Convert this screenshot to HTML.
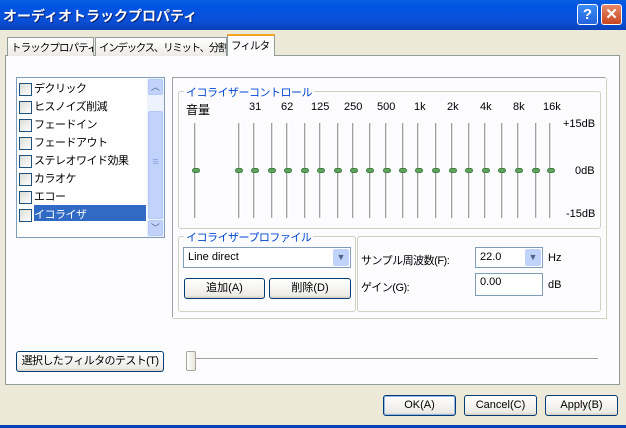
<!DOCTYPE html>
<html><head><meta charset="utf-8"><style>
*{margin:0;padding:0;box-sizing:border-box}
body{width:626px;height:428px;overflow:hidden;background:#ece9d8;font-family:"Liberation Sans","Noto Sans CJK JP",sans-serif;font-size:11px;color:#000;position:relative;white-space:nowrap}
.a{position:absolute}
.title{left:0;top:0;width:626px;height:30px;background:linear-gradient(#0a5fe0,#0054e3 20%,#0a4fd8 70%,#0842b8);color:#fff;font-size:14px;font-weight:bold;padding:6px 0 0 3px;text-shadow:1px 1px #0a1f6e}
.tb{top:4px;width:21px;height:21px;border:1px solid #fff;border-radius:3px;color:#fff;font-weight:bold;text-align:center;font-size:15px;line-height:19px}
.tab{top:37px;height:19px;background:linear-gradient(#fff,#ecebe6);border:1px solid #919b9c;border-bottom:none;padding:2px 3px;font-size:10.5px;letter-spacing:-0.9px;overflow:hidden}
.panel{left:5px;top:55px;width:615px;height:330px;background:#fcfcfe;border:1px solid #919b9c}
.cb{width:13px;height:13px;border:1px solid #1c5180;background:linear-gradient(135deg,#dcdcd6,#fff)}
.grp{border:1px solid #d0d0bf;border-radius:3px}
.gl{background:#fcfcfe;color:#0046d5;padding:0 2px;font-size:11px;letter-spacing:-0.5px}
.track{width:3px;top:123px;height:95px;border-left:1px solid #a0a0a0;border-right:1px solid #fff;background:#e0e0e0}
.th{top:168px;width:8px;height:5px;border-radius:3px;background:#5fa35f;border:1px solid #3f7f3f}
.btn{border:1px solid #003c74;border-radius:3px;background:linear-gradient(#fff,#ecebe6 85%,#d6d0c5);text-align:center;font-size:11px;overflow:hidden}
.lbl{top:101px;font-size:11px}
.li{display:flex;align-items:center;gap:2px;letter-spacing:-0.5px}
</style></head><body>
<div class="a title">オーディオトラックプロパティ</div>
<div class="a tb" style="left:577px;background:linear-gradient(#3c8cf6,#2463de)">?</div>
<div class="a tb" style="left:601px;background:linear-gradient(#e88a6a,#c8451f)">✕</div>

<div class="a panel"></div>
<div class="a tab" style="left:7px;width:87px">トラックプロパティ</div>
<div class="a tab" style="left:95px;width:132px;letter-spacing:-1.3px">インデックス、リミット、分割</div>
<div class="a tab" style="left:227px;top:34px;height:22px;width:48px;background:#fcfcfe;border-top:2px solid #f5a623">フィルタ</div>

<div class="a" style="left:16px;top:77px;width:149px;height:161px;background:#fff;border:1px solid #7f9db9"></div>
<div class="a" style="left:147px;top:78px;width:17px;height:159px;background:#eef2fc"></div>
<div class="a" style="left:148px;top:79px;width:15px;height:16px;background:#c1d3fb;border:1px solid #b4c8f6;border-radius:2px;color:#4d6185;font-size:9px;text-align:center">︿</div>
<div class="a" style="left:148px;top:111px;width:15px;height:108px;background:#c1d3fb;border:1px solid #b4c8f6;border-radius:2px;color:#8aa3dc;text-align:center;line-height:100px">≡</div>
<div class="a" style="left:148px;top:220px;width:15px;height:16px;background:#c1d3fb;border:1px solid #b4c8f6;border-radius:2px;color:#4d6185;font-size:9px;text-align:center">﹀</div>
<div class="a" style="left:34px;top:205px;width:112px;height:16px;background:#316ac5"></div>
<div class="a" style="left:19px;top:80px;line-height:18px">
<div class="li"><div class="cb"></div>デクリック</div>
<div class="li"><div class="cb"></div>ヒスノイズ削減</div>
<div class="li"><div class="cb"></div>フェードイン</div>
<div class="li"><div class="cb"></div>フェードアウト</div>
<div class="li"><div class="cb"></div>ステレオワイド効果</div>
<div class="li"><div class="cb"></div>カラオケ</div>
<div class="li"><div class="cb"></div>エコー</div>
<div class="li"><div class="cb"></div><span style="color:#fff">イコライザ</span></div>
</div>

<div class="a" style="left:172px;top:77px;width:434px;height:241px;border:1px solid #a0a0a0;border-right-color:#fff;border-bottom-color:#fff;box-shadow:1px 1px 0 #d0d0bf"></div>
<div class="a grp" style="left:178px;top:91px;width:423px;height:138px"></div>
<div class="a gl" style="left:184px;top:84px">イコライザーコントロール</div>
<div class="a lbl" style="left:186px;font-size:12px">音量</div>
<div class="a lbl" style="left:249px">31</div>
<div class="a lbl" style="left:281px">62</div>
<div class="a lbl" style="left:311px">125</div>
<div class="a lbl" style="left:344px">250</div>
<div class="a lbl" style="left:377px">500</div>
<div class="a lbl" style="left:414px">1k</div>
<div class="a lbl" style="left:447px">2k</div>
<div class="a lbl" style="left:480px">4k</div>
<div class="a lbl" style="left:513px">8k</div>
<div class="a lbl" style="left:543px">16k</div>
<div class="a" style="left:563px;top:118px">+15dB</div>
<div class="a" style="left:575px;top:165px">0dB</div>
<div class="a" style="left:566px;top:208px">-15dB</div>
<div class="a track" style="left:194px"></div><div class="a th" style="left:192px"></div>
<div class="a track" style="left:238px"></div><div class="a th" style="left:235px"></div>
<div class="a track" style="left:253px"></div><div class="a th" style="left:251px"></div>
<div class="a track" style="left:271px"></div><div class="a th" style="left:268px"></div>
<div class="a track" style="left:286px"></div><div class="a th" style="left:284px"></div>
<div class="a track" style="left:304px"></div><div class="a th" style="left:301px"></div>
<div class="a track" style="left:319px"></div><div class="a th" style="left:317px"></div>
<div class="a track" style="left:337px"></div><div class="a th" style="left:334px"></div>
<div class="a track" style="left:352px"></div><div class="a th" style="left:350px"></div>
<div class="a track" style="left:369px"></div><div class="a th" style="left:366px"></div>
<div class="a track" style="left:385px"></div><div class="a th" style="left:383px"></div>
<div class="a track" style="left:402px"></div><div class="a th" style="left:399px"></div>
<div class="a track" style="left:417px"></div><div class="a th" style="left:415px"></div>
<div class="a track" style="left:435px"></div><div class="a th" style="left:432px"></div>
<div class="a track" style="left:451px"></div><div class="a th" style="left:449px"></div>
<div class="a track" style="left:468px"></div><div class="a th" style="left:465px"></div>
<div class="a track" style="left:484px"></div><div class="a th" style="left:482px"></div>
<div class="a track" style="left:501px"></div><div class="a th" style="left:498px"></div>
<div class="a track" style="left:517px"></div><div class="a th" style="left:515px"></div>
<div class="a track" style="left:535px"></div><div class="a th" style="left:532px"></div>
<div class="a track" style="left:549px"></div><div class="a th" style="left:547px"></div>

<div class="a grp" style="left:178px;top:236px;width:178px;height:76px"></div>
<div class="a gl" style="left:184px;top:229px">イコライザープロファイル</div>
<div class="a" style="left:183px;top:247px;width:168px;height:21px;background:#fff;border:1px solid #7f9db9;padding:3px 4px">Line direct</div>
<div class="a" style="left:333px;top:249px;width:16px;height:17px;background:#c1d3fb;border-radius:2px;color:#4d6185;font-size:9px;text-align:center;line-height:17px">▼</div>
<div class="a btn" style="left:184px;top:278px;width:81px;height:21px;line-height:19px">追加(A)</div>
<div class="a btn" style="left:269px;top:278px;width:82px;height:21px;line-height:19px">削除(D)</div>
<div class="a grp" style="left:357px;top:236px;width:244px;height:76px"></div>
<div class="a" style="left:361px;top:252px;letter-spacing:-0.5px">サンプル周波数(F):</div>
<div class="a" style="left:475px;top:247px;width:68px;height:21px;background:#fff;border:1px solid #7f9db9;padding:3px 4px">22.0</div>
<div class="a" style="left:525px;top:249px;width:16px;height:17px;background:#c1d3fb;border-radius:2px;color:#4d6185;font-size:9px;text-align:center;line-height:17px">▼</div>
<div class="a" style="left:548px;top:252px">Hz</div>
<div class="a" style="left:361px;top:279px;letter-spacing:-0.5px">ゲイン(G):</div>
<div class="a" style="left:475px;top:273px;width:68px;height:23px;background:#fff;border:1px solid #7f9db9;padding:2px 4px">0.00</div>
<div class="a" style="left:548px;top:279px">dB</div>

<div class="a btn" style="left:16px;top:351px;width:148px;height:21px;line-height:19px;letter-spacing:-0.6px">選択したフィルタのテスト(T)</div>
<div class="a" style="left:190px;top:358px;width:408px;height:2px;border-top:1px solid #a0a0a0;border-bottom:1px solid #fff"></div>
<div class="a" style="left:186px;top:351px;width:10px;height:20px;border:1px solid #a5a59a;border-radius:2px;background:linear-gradient(90deg,#fff,#e8e6dc)"></div>

<div class="a btn" style="left:383px;top:395px;width:73px;height:21px;line-height:19px;box-shadow:inset 0 0 0 1px #98b8ea">OK(A)</div>
<div class="a btn" style="left:464px;top:395px;width:73px;height:21px;line-height:19px">Cancel(C)</div>
<div class="a btn" style="left:545px;top:395px;width:73px;height:21px;line-height:19px">Apply(B)</div>
<div class="a" style="left:0;top:425px;width:626px;height:3px;background:#0842b8"></div>
</body></html>
